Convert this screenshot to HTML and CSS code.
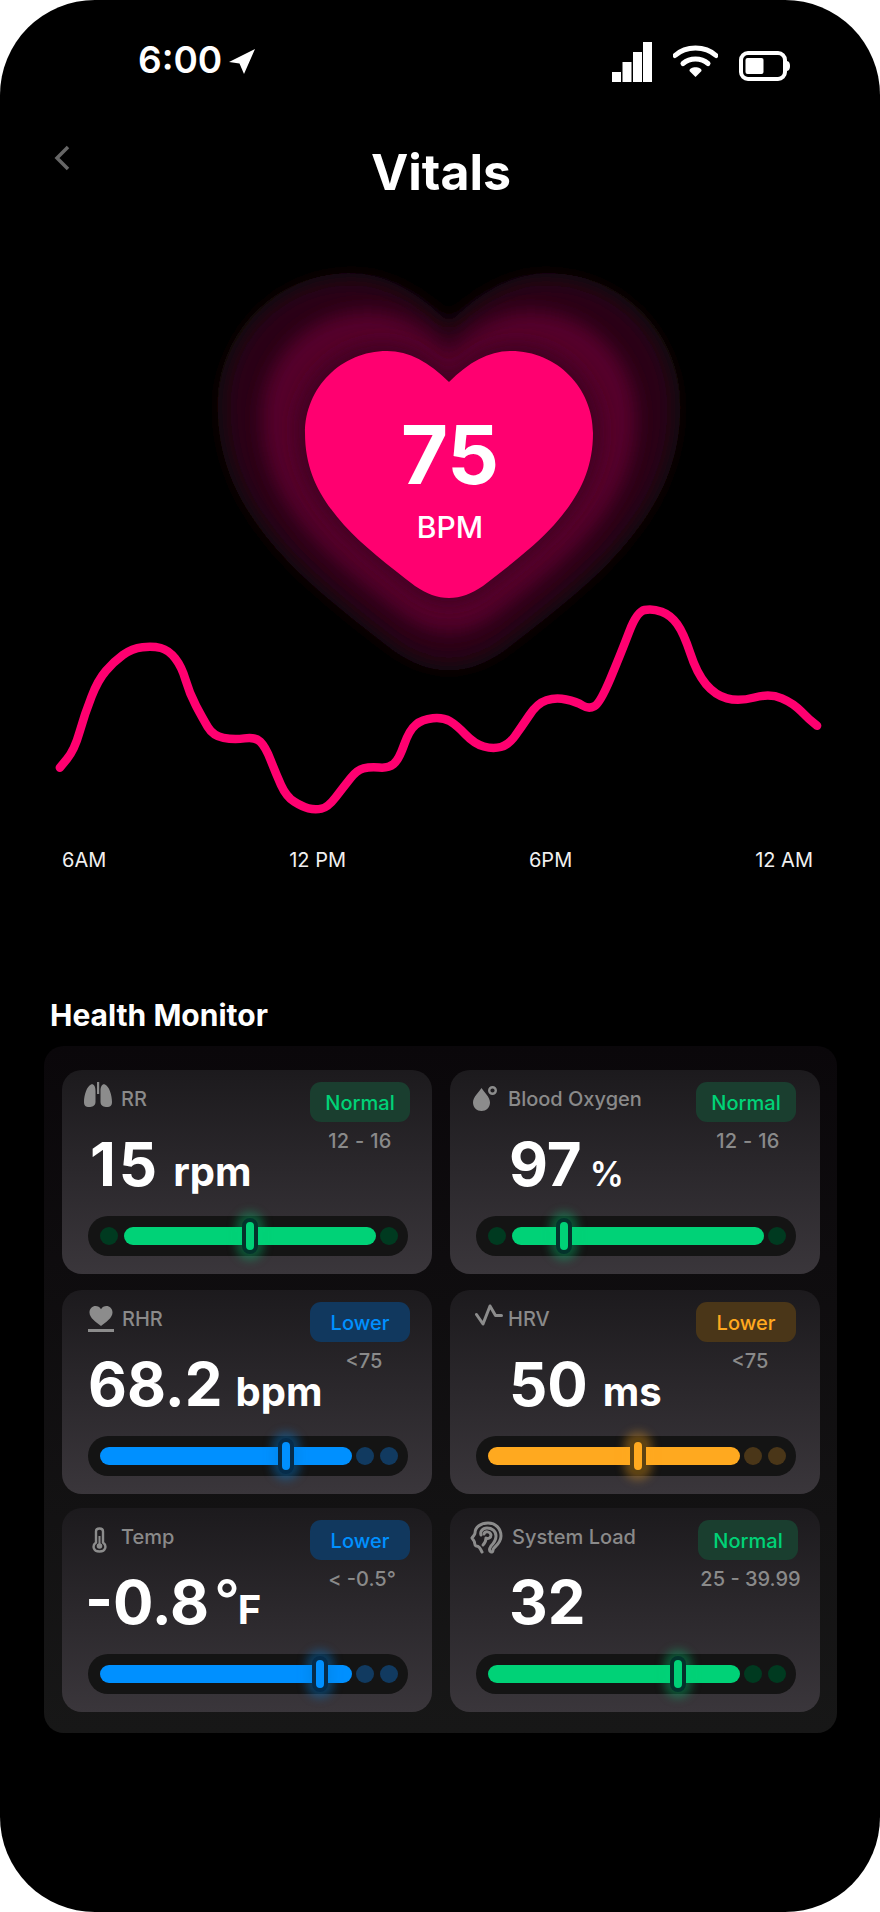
FILE: index.html
```html
<!DOCTYPE html>
<html lang="en">
<head>
<meta charset="utf-8">
<title>Vitals</title>
<link rel="stylesheet" href="styles.css">
</head>
<body>
<main class="screen">
  <header class="status">
    <div class="clock">
      <span class="time">6:00</span>
      <svg class="loc" viewBox="0 0 26 25"><path d="M26 0 0 13 10.500 14.500 15 25Z"/></svg>
    </div>
    <div class="status-icons">
      <svg class="signal" viewBox="0 0 40 40"><rect x="0" y="30" width="9" height="10"/><rect x="10.500" y="20" width="9" height="20"/><rect x="21" y="10" width="9" height="30"/><rect x="31" y="0" width="9" height="40"/></svg>
      <svg class="wifi" viewBox="0 0 45 32"><path class="wifi-arc" d="M2 10.500C13 .5 32 .5 43 10.500"/><path class="wifi-arc" d="M10 18.500C17 12.500 28 12.500 35 18.500"/><path d="M22.500 32 16.500 26C16 21 29 21 28.500 26Z"/></svg>
      <svg class="battery" viewBox="0 0 51 30"><rect class="batt-shell" x="2" y="2" width="44" height="26" rx="7"/><rect x="6.500" y="7" width="18" height="16" rx="2"/><path d="M48 10C50 10.500 51 12 51 15C51 18 50 19.500 48 20Z"/></svg>
    </div>
  </header>

  <div class="title-row">
    <svg class="back" viewBox="0 0 16 26"><path d="M14 2 3 13 14 24"/></svg>
    <h1>Vitals</h1>
  </div>

  <section class="heart-wrap">
    <svg class="heart-art" viewBox="0 0 500 430">
      <defs>
        <path id="heart" d="M258 132C278 112 298 101 320 101C366 101 402 138 402 183C402 222 386 249 363 275C345 295 318 316 292 336C280 344 270 348 258 348C246 348 236 344 224 336C198 316 171 295 153 275C130 249 114 222 114 183C114 138 150 101 196 101C218 101 238 112 258 132Z"/>
        <filter id="b1" x="-20%" y="-20%" width="140%" height="140%"><feGaussianBlur stdDeviation="4"/></filter>
        <filter id="b2" x="-20%" y="-20%" width="140%" height="140%"><feGaussianBlur stdDeviation="6"/></filter>
        <filter id="b3" x="-20%" y="-20%" width="140%" height="140%"><feGaussianBlur stdDeviation="7"/></filter>
        <filter id="b4" x="-20%" y="-20%" width="140%" height="140%"><feGaussianBlur stdDeviation="8"/></filter>
      </defs>
      <use href="#heart" class="glow-a" filter="url(#b1)" transform="translate(258 221) scale(1.61) translate(-258 -224)"/>
      <use href="#heart" class="glow-b" filter="url(#b2)" transform="translate(258 221) scale(1.56) translate(-258 -224)"/>
      <use href="#heart" class="glow-c" filter="url(#b3)" transform="translate(258 221) scale(1.3) translate(-258 -224)"/>
      <use href="#heart" class="glow-d" filter="url(#b4)" transform="translate(258 223) scale(1.06) translate(-258 -224)"/>
      <use href="#heart" class="heart-core"/>
    </svg>
    <div class="heart-text">
      <span class="bpm-value">75</span>
      <span class="bpm-label">BPM</span>
    </div>
  </section>

  <section class="chart">
    <svg class="trend" viewBox="0 0 880 250"><path d="M59.800 167.700L67 159Q74.500 150 79.700 131.700Q84.900 113.300 91.500 96.700Q98 80 105.900 70.900Q113.700 61.700 122.900 55Q132 48.300 142.500 47.200Q152.900 46 160.800 48Q168.600 50 175.200 58.400Q181.700 66.700 185.600 80Q189.500 93.300 196 105.800Q202.600 118.300 207.800 127Q213 135.700 223.500 137.900Q234 140 244.500 138.400Q254.900 136.700 260.200 141.700Q265.400 146.700 270.600 160Q275.800 173.300 281 185Q286.300 196.700 294.200 201.700Q302 206.700 308.500 208.400Q315 210 321.500 208.700Q328 207.300 335.900 197Q343.800 186.700 350.400 178.400Q356.900 170 363.500 168.400Q370 166.700 379.200 167.500Q388.300 168.300 393.500 164.200Q398.700 160 404 145Q409.200 130 415.800 124.700Q422.300 119.300 432.800 118.300Q443.200 117.300 449.800 121.200Q456.300 125 465.500 134.500Q474.600 144 483.800 146.500Q492.900 149 500.800 147Q508.600 145 515.100 135.900Q521.600 126.700 529.500 115Q537.300 103.300 546.500 100.300Q555.600 97.300 566 99.500Q576.500 101.700 582.600 105.500Q588.600 109.300 594.300 106.300Q600 103.300 610.500 78.300Q621 53.300 628.900 32.500Q636.700 11.700 644.600 10Q652.400 8.300 661.600 11.700Q670.700 15 677.300 24.200Q683.800 33.300 690.300 53.300Q696.800 73.300 706 84.200Q715.100 95 726.900 98.400Q738.700 101.700 754.400 97.500Q770 93.300 781.800 98.300Q793.600 103.300 801.500 111.700Q809.300 120 817.100 125.700"/></svg>
    <div class="axis"><span>6AM</span><span>12 PM</span><span>6PM</span><span>12 AM</span></div>
  </section>

  <h2 class="section-title">Health Monitor</h2>

  <section class="panel">
    <article class="card good c-rr">
      <div class="main">
        <div class="head">
          <svg class="ico ico-lungs" viewBox="0 0 28 25"><rect x="13" y="0" width="2.200" height="12"/><path d="M11.500 9C11.500 4 9.500 1.500 7 2.500C3 4 0 13 0 20C0 24 2 25 5 25C8 25 11.500 24 11.500 20Z"/><path d="M16.500 9C16.500 4 18.500 1.500 21 2.500C25 4 28 13 28 20C28 24 26 25 23 25C20 25 16.500 24 16.500 20Z"/></svg>
          <span class="label">RR</span>
        </div>
        <div class="value">15<span class="unit">rpm</span></div>
      </div>
      <div class="side"><span class="badge">Normal</span><span class="range">12 - 16</span></div>
      <div class="track">
        <i class="dot"></i>
        <div class="fill"><i class="thumb" style="left:50%"></i></div>
        <i class="dot"></i>
      </div>
    </article>

    <article class="card good c-spo">
      <div class="main">
        <div class="head">
          <svg class="ico ico-drop" viewBox="0 0 24 25"><path d="M8.500 2C11 6 17 11 17 16.500C17 21.500 13 25 8.500 25C4 25 0 21.500 0 16.500C0 11 6 6 8.500 2Z"/><circle class="ring" cx="19.500" cy="4.500" r="3.300"/></svg>
          <span class="label">Blood Oxygen</span>
        </div>
        <div class="value">97<span class="unit pct">%</span></div>
      </div>
      <div class="side"><span class="badge">Normal</span><span class="range">12 - 16</span></div>
      <div class="track">
        <i class="dot"></i>
        <div class="fill"><i class="thumb" style="left:20.6%"></i></div>
        <i class="dot"></i>
      </div>
    </article>

    <article class="card low c-rhr">
      <div class="main">
        <div class="head">
          <svg class="ico ico-rhr" viewBox="0 0 26 26"><path d="M13 20C8 16 1.500 12 1.500 6.500C1.500 2.500 4.500 0 7.500 0C9.800 0 11.800 1.200 13 3.200C14.200 1.200 16.200 0 18.500 0C21.500 0 24.500 2.500 24.500 6.500C24.500 12 18 16 13 20Z"/><rect x="0" y="23" width="26" height="3"/></svg>
          <span class="label">RHR</span>
        </div>
        <div class="value">68.2<span class="unit">bpm</span></div>
      </div>
      <div class="side"><span class="badge">Lower</span><span class="range">&lt;75</span></div>
      <div class="track">
        <div class="fill"><i class="thumb" style="left:73.8%"></i></div>
        <i class="dot"></i>
        <i class="dot"></i>
      </div>
    </article>

    <article class="card warn c-hrv">
      <div class="main">
        <div class="head">
          <svg class="ico ico-hrv" viewBox="0 0 28 22"><path d="M1.500 10.500 8 20 15 2 20.500 11.500H26.500"/></svg>
          <span class="label">HRV</span>
        </div>
        <div class="value">50<span class="unit">ms</span></div>
      </div>
      <div class="side"><span class="badge">Lower</span><span class="range">&lt;75</span></div>
      <div class="track">
        <div class="fill"><i class="thumb" style="left:59.5%"></i></div>
        <i class="dot"></i>
        <i class="dot"></i>
      </div>
    </article>

    <article class="card low c-temp">
      <div class="main">
        <div class="head">
          <svg class="ico ico-temp" viewBox="0 0 15 26"><path class="outline" d="M4 15.500V4.500C4 .5 11 .5 11 4.500V15.500C15 18.500 14 24.500 7.500 24.500C1 24.500 0 18.500 4 15.500Z"/><circle class="bulb" cx="7.500" cy="19" r="2.800"/><rect class="bulb" x="6.500" y="9" width="2" height="9"/></svg>
          <span class="label">Temp</span>
        </div>
        <div class="value">-0.8<span class="unit deg">°</span><span class="unit fahr">F</span></div>
      </div>
      <div class="side"><span class="badge">Lower</span><span class="range">&lt; -0.5°</span></div>
      <div class="track">
        <div class="fill"><i class="thumb" style="left:87.3%"></i></div>
        <i class="dot"></i>
        <i class="dot"></i>
      </div>
    </article>

    <article class="card good c-load">
      <div class="main">
        <div class="head">
          <svg class="ico ico-load" viewBox="0 0 33 33"><path class="outline" d="M12 31C10 27 9 25 6 25C4 24 5 21 4 20L2 17C3 15 5 14 5 12C5 6 11 2 18 2C26 2 31 8 31 15C31 21 27 24 24 27C22 29 24 31 21 31C19 30 19 28 21 25C24 22 26 19 26 15C26 10 22 7 17 7C12 7 10 11 11 14"/><path class="outline" d="M14 13C15 10 20 10 21 14C21 17 18 18 16 17C16 20 15 22 13 24"/></svg>
          <span class="label">System Load</span>
        </div>
        <div class="value">32</div>
      </div>
      <div class="side"><span class="badge">Normal</span><span class="range">25 - 39.99</span></div>
      <div class="track">
        <div class="fill"><i class="thumb" style="left:75.4%"></i></div>
        <i class="dot"></i>
        <i class="dot"></i>
      </div>
    </article>
  </section>
</main>
</body>
</html>
```

FILE: styles.css
```css
* { box-sizing: border-box; margin: 0; padding: 0; }
html, body { background: #fff; }
body { width: 880px; height: 1912px; overflow: hidden; font-family: Inter, "Liberation Sans", sans-serif; color: #fff; }

.screen { width: 880px; height: 1912px; background: #000; border-radius: 95px; overflow: hidden; padding-top: 42px; }

.status { height: 40px; display: flex; justify-content: space-between; padding: 0 90px 0 138px; }
.clock { display: flex; align-items: flex-start; gap: 7px; }
.time { font-size: 37px; font-weight: 600; line-height: 36px; }
.loc { width: 26px; height: 25px; margin-top: 7px; fill: #fff; }
.status-icons { display: flex; align-items: flex-start; }
.signal { width: 40px; height: 40px; fill: #fff; }
.wifi { width: 45px; height: 32px; margin: 3px 0 0 21px; fill: #fff; }
.wifi-arc { fill: none; stroke: #fff; stroke-width: 5; stroke-linecap: round; }
.battery { width: 51px; height: 30px; margin: 9px 0 0 21px; fill: #fff; }
.batt-shell { fill: none; stroke: #fff; stroke-width: 4; }

.title-row { display: flex; align-items: flex-start; height: 68px; margin-top: 60px; }
.back { width: 16px; height: 26px; margin: 3px 0 0 54px; fill: none; stroke: #666; stroke-width: 3.500; }
.title-row h1 { width: 256px; margin-left: 243px; text-align: center; font-size: 50px; font-weight: 700; line-height: 60px; }

.heart-wrap { position: relative; height: 430px; margin-top: 40px; }
.heart-art { position: absolute; left: 190.500px; top: 0; width: 500px; height: 430px; overflow: visible; }
.glow-a { fill: #0a0809; }
.glow-b { fill: #2a0015; }
.glow-c { fill: #55002b; }
.glow-d { fill: #420023; }
.heart-core { fill: #ff0070; }
.heart-text { position: absolute; left: 306px; top: 160px; width: 288px; display: flex; flex-direction: column; align-items: center; }
.bpm-value { font-size: 81px; font-weight: 700; line-height: 90px; }
.bpm-label { font-size: 30px; font-weight: 500; line-height: 36px; margin-top: 9px; }

.chart { margin-top: -80px; position: relative; }
.trend { display: block; width: 880px; height: 250px; overflow: visible; fill: none; stroke: #ff0070; stroke-width: 8.500; stroke-linecap: round; stroke-linejoin: round; }
.axis { display: flex; justify-content: space-between; padding: 0 67px 0 62px; margin-top: -2px; font-size: 20px; line-height: 24px; color: #f0f0f0; }

.section-title { font-size: 30px; font-weight: 700; line-height: 36px; margin: 0 0 13px 50px; padding-top: 125px; }

.panel { width: 793px; height: 687px; margin: 0 0 0 44px; border-radius: 20px; padding: 24px 0 0 18px; background: linear-gradient(180deg, #0a070a 0%, #171717 100%); display: grid; grid-template-columns: 370px 370px; column-gap: 18px; grid-template-rows: 220px 218px 204px; }

.card { height: 204px; border-radius: 20px; background: linear-gradient(180deg, #1c1a1d 0%, #3a363b 100%); padding: 12px 22px 0 0; display: grid; grid-template-columns: minmax(0, 1fr) 100px; grid-template-rows: 134px 40px; position: relative; }
.head { display: flex; align-items: flex-start; height: 40px; }
.label { font-size: 20px; font-weight: 500; color: #8a8a8a; line-height: 24px; margin-top: 5px; white-space: nowrap; }
.ico { fill: #8c8c8c; display: block; flex: none; }
.ring, .outline { fill: none; stroke: #8c8c8c; stroke-width: 2.400; }
.ico-load .outline { stroke-width: 3; stroke-linecap: round; stroke-linejoin: round; }
.bulb { fill: #8c8c8c; }
.ico-hrv { fill: none; stroke: #8c8c8c; stroke-width: 3; stroke-linecap: round; stroke-linejoin: round; }

.value { font-size: 60px; font-weight: 700; line-height: 72px; white-space: nowrap; margin-top: 6px; }
.unit { font-size: 40px; font-weight: 700; margin-left: 13px; letter-spacing: 0; }
.pct { font-size: 34px; font-weight: 600; margin-left: 8px; }
.deg { font-size: 56px; font-weight: 500; margin-left: 5px; vertical-align: 4px; line-height: 0; }
.fahr { margin-left: -2px; }

.side { display: flex; flex-direction: column; align-items: center; }
.badge { width: 100px; height: 40px; border-radius: 11px; font-size: 20px; font-weight: 500; line-height: 42px; text-align: center; }
.range { font-size: 20px; font-weight: 500; color: #8a8a8a; line-height: 24px; margin-top: 7px; white-space: nowrap; }

.track { grid-column: 1 / -1; width: 320px; height: 40px; margin-left: 26px; border-radius: 20px; background: #141414; display: flex; align-items: center; padding: 0 10px 0 12px; }
.fill { width: 252px; height: 18px; border-radius: 9px; position: relative; flex: none; margin-right: 4px; }
.dot { width: 18px; height: 18px; border-radius: 50%; flex: none; }
.dot + .fill, .dot + .dot { margin-left: 6px; }
.thumb { position: absolute; top: 50%; width: 16px; height: 36px; border-radius: 8px; border: 4px solid; transform: translate(-50%, -50%); }

.good .badge { background: #1a3e2f; color: #00d277; }
.good .fill, .good .thumb { background: #00d277; }
.good .dot { background: #003a20; }
.good .thumb { border-color: #04332c; box-shadow: 0 0 10px 6px rgba(0, 210, 119, .35); }

.low .badge { background: #11385e; color: #0090ff; }
.low .fill, .low .thumb { background: #0090ff; }
.low .dot { background: #113a60; }
.low .thumb { border-color: #062c4a; box-shadow: 0 0 10px 6px rgba(0, 130, 220, .38); }

.warn .badge { background: #4a3618; color: #ffa91f; }
.warn .fill, .warn .thumb { background: #ffa91f; }
.warn .dot { background: #4a3618; }
.warn .thumb { border-color: #5c4213; box-shadow: 0 0 10px 6px rgba(255, 169, 31, .35); }

.c-rr .ico { width: 28px; height: 25px; margin: 0 9px 0 22px; }
.c-rr .value { margin-left: 28px; letter-spacing: 3px; }
.c-rr .range, .c-spo .range { letter-spacing: .3px; }
.c-spo .ico { width: 24px; height: 25px; margin: 4px 11px 0 23px; }
.c-spo .value { margin-left: 59px; }
.c-rhr .ico { width: 26px; height: 26px; margin: 4px 8px 0 26px; }
.c-rhr .value { margin-left: 26px; }
.c-hrv .ico { width: 28px; height: 22px; margin: 2px 5px 0 25px; }
.c-hrv .value { margin-left: 59px; }
.c-hrv .unit { margin-left: 15px; }
.c-temp .ico { width: 15px; height: 26px; margin: 7px 14px 0 30px; }
.c-temp .value { margin-left: 23px; }
.c-load .ico { width: 33px; height: 33px; margin: 1px 9px 0 20px; }
.c-load .value { margin-left: 59px; }
.c-spo .side, .c-hrv .side { margin: 0 2px 0 -2px; }
.c-spo .range { margin-left: 4px; }
.c-rhr .range, .c-hrv .range { margin-left: 8px; }
.c-temp .range { margin-left: 4px; }
.c-load .range { margin-left: 5px; }
```
